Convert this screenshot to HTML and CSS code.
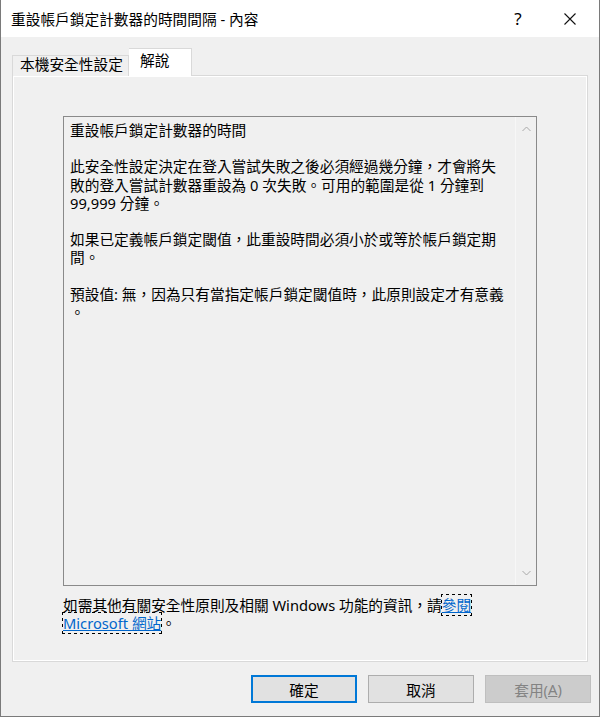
FILE: index.html
```html
<!DOCTYPE html>
<html lang="zh-Hant">
<head>
    <meta charset="UTF-8">
    <title>重設帳戶鎖定計數器的時間間隔 - 內容</title>
    <link rel="stylesheet" href="styles.css">
</head>
<body>
    <div class="window">
        <div class="titlebar">
            <span class="title">重設帳戶鎖定計數器的時間間隔 - 內容</span>
            <span class="help">?</span>
            <span class="close">
                <svg width="12" height="12" viewBox="0 0 12 12"><path d="M0.5 0.5 L11.5 11.5 M11.5 0.5 L0.5 11.5" stroke="#111" stroke-width="1.1" fill="none"/></svg>
            </span>
        </div>

        <div class="body">
            <div class="tabs">
                <div class="tab">本機安全性設定</div>
                <div class="tab active">解說</div>
            </div>

            <div class="panel">
                <div class="textbox">
                    <div class="text">
                        <p>重設帳戶鎖定計數器的時間</p>
                        <p>此安全性設定決定在登入嘗試失敗之後必須經過幾分鐘，才會將失<br>敗的登入嘗試計數器重設為 0 次失敗。可用的範圍是從 1 分鐘到<br>99,999 分鐘。</p>
                        <p>如果已定義帳戶鎖定閾值，此重設時間必須小於或等於帳戶鎖定期<br>間。</p>
                        <p>預設值: 無，因為只有當指定帳戶鎖定閾值時，此原則設定才有意義<br>。</p>
                    </div>
                    <div class="scrollbar">
                        <svg width="9" height="6" viewBox="0 0 9 6"><path d="M0.5 5 L4.5 1 L8.5 5" stroke="#a8a8a8" fill="none"/></svg>
                        <svg width="9" height="6" viewBox="0 0 9 6"><path d="M0.5 1 L4.5 5 L8.5 1" stroke="#a8a8a8" fill="none"/></svg>
                    </div>
                </div>
                <div class="more">如需其他有關安全性原則及相關 Windows 功能的資訊，請<a class="link" href="#">參閱<br>Microsoft 網站</a>。</div>
            </div>

            <div class="buttons">
                <div class="btn default">確定</div>
                <div class="btn">取消</div>
                <div class="btn disabled">套用(<u>A</u>)</div>
            </div>
        </div>
    </div>
</body>
</html>
```

FILE: styles.css
```css
* {
    margin: 0;
    padding: 0;
    box-sizing: border-box;
}

body {
    width: 600px;
    height: 717px;
    font-family: 'Noto Sans', 'Noto Sans CJK TC', sans-serif;
    font-size: 14.7px;
    color: #000;
    background: #f0f0f0;
}

.window {
    width: 600px;
    height: 717px;
    border: 1px solid #7a7a7a;
    border-top: none;
    background: #f0f0f0;
    display: flex;
    flex-direction: column;
}

.titlebar {
    height: 37px;
    background: #fff;
    display: flex;
    align-items: center;
    padding-left: 10px;
}

.title {
    flex: 1;
    line-height: 20px;
}

.help {
    width: 46px;
    text-align: center;
    font-size: 17px;
    margin-right: 6px;
}

.close {
    width: 46px;
    display: flex;
    justify-content: center;
    align-items: center;
    margin-right: 6px;
}

.body {
    padding: 11px 0 0 11px;
}

.tabs {
    display: flex;
    align-items: flex-end;
    height: 28px;
    margin-bottom: -1px;
}

.tab {
    height: 21px;
    width: 117px;
    border: 1px solid #d9d9d9;
    border-bottom: none;
    background: #f0f0f0;
    line-height: 16px;
    padding-left: 7px;
}

.tab.active {
    position: relative;
    z-index: 1;
    height: 28px;
    width: 63px;
    background: #fff;
    border-left: none;
    line-height: 22px;
    padding-left: 11px;
}

.panel {
    width: 576px;
    height: 587px;
    border: 1px solid #d9d9d9;
    box-shadow: inset 1px 1px 0 #fff, inset -1px -1px 0 #fff;
    padding: 40px 0 0 50px;
}

.textbox {
    width: 474px;
    height: 470px;
    border: 1px solid #8a8a8a;
    background: #f0f0f0;
    display: flex;
}

.text {
    flex: 1;
    padding: 4px 0 0 6px;
    line-height: 18.2px;
    white-space: nowrap;
    overflow: hidden;
}

.text p {
    margin-bottom: 18.2px;
}

.scrollbar {
    width: 21px;
    border-left: 1px solid #f7f7f7;
    background: #f0f0f0;
    display: flex;
    flex-direction: column;
    justify-content: space-between;
    align-items: center;
    padding: 9px 0 9px;
}

.more {
    margin-top: 10px;
    line-height: 18px;
}

.link {
    color: #0066cc;
    text-decoration: underline;
    outline: 1px dotted #000;
}

.buttons {
    display: flex;
    justify-content: flex-end;
    gap: 11px;
    margin-top: 13px;
    padding-right: 8px;
}

.btn {
    width: 106px;
    height: 28px;
    border: 1px solid #adadad;
    background: #e1e1e1;
    display: flex;
    align-items: center;
    justify-content: center;
}

.btn.default {
    border: 2px solid #0078d7;
}

.btn.disabled {
    background: #cccccc;
    border-color: #bfbfbf;
    color: #838383;
}

.btn.disabled u {
    text-decoration: underline;
}
```
